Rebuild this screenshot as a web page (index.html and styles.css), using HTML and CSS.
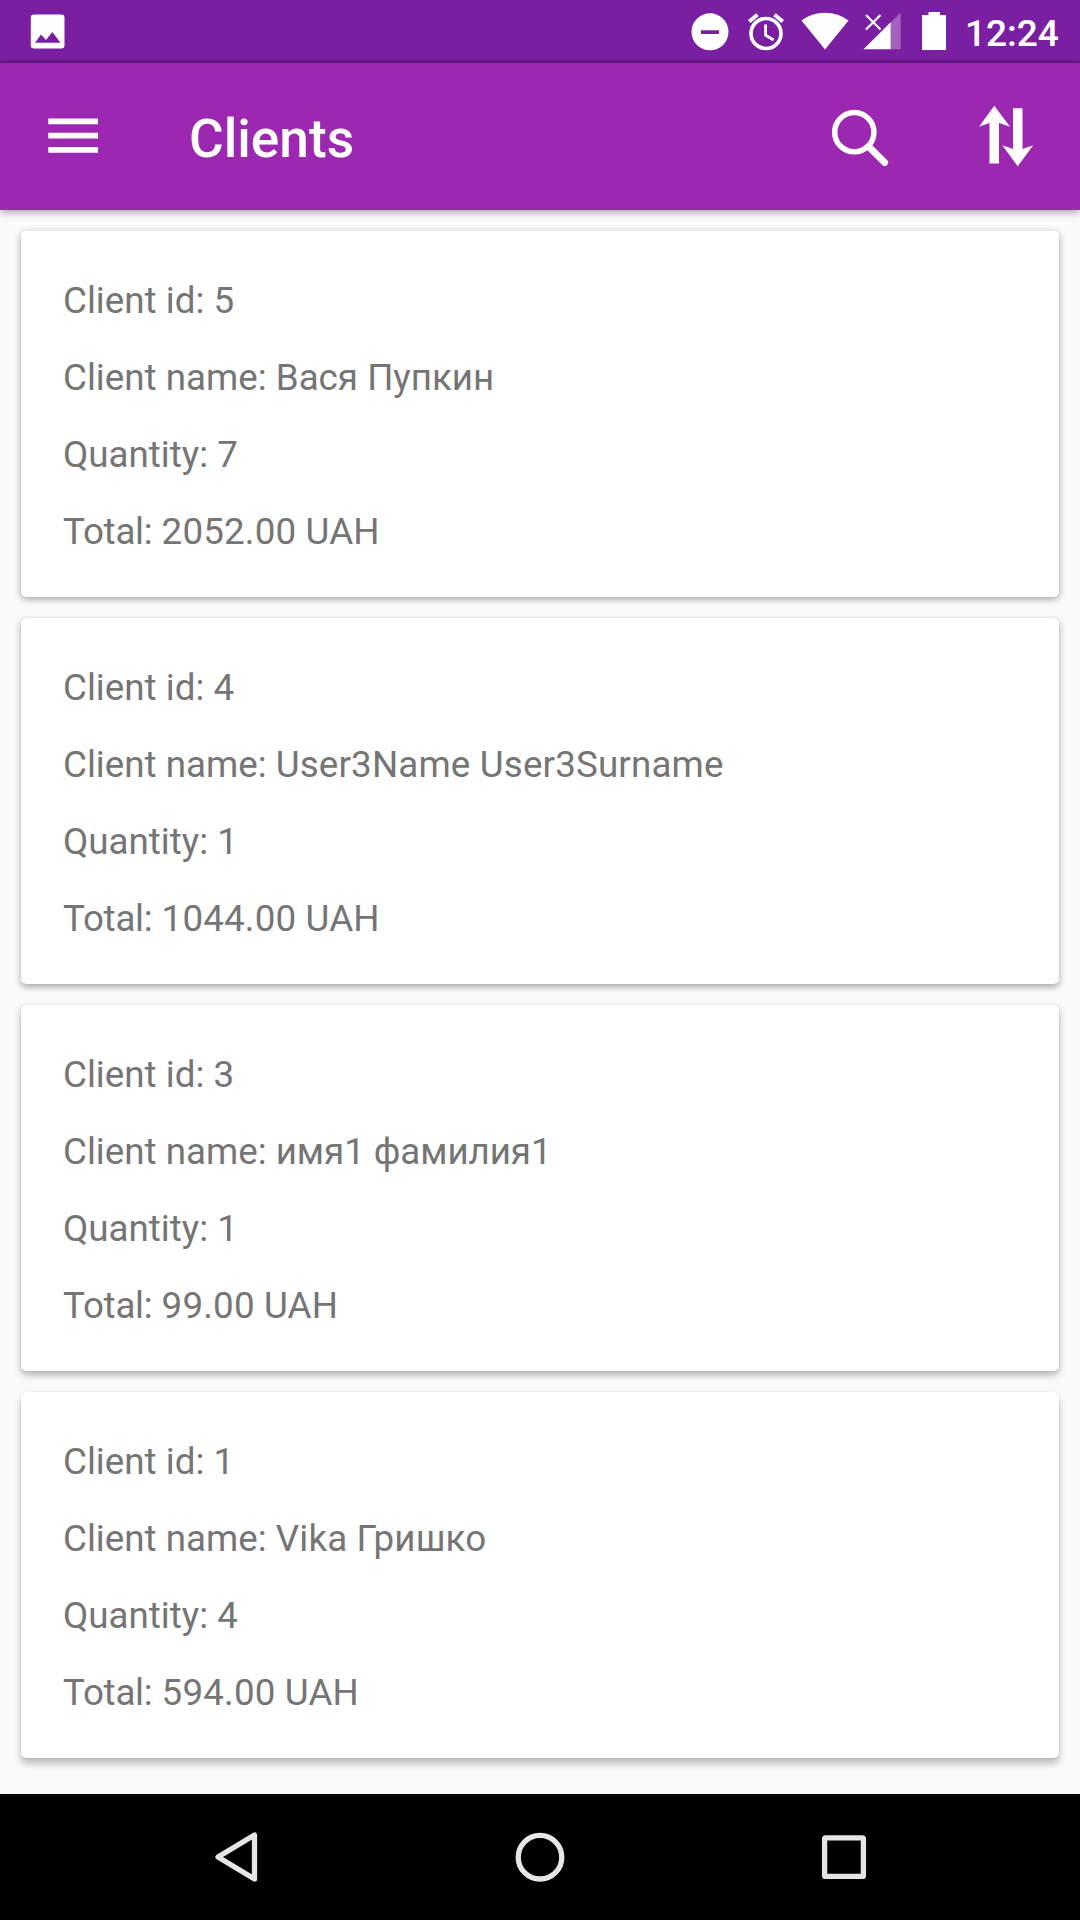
FILE: index.html
```html
<!DOCTYPE html>
<html lang="en">
<head>
<meta charset="utf-8">
<title>Clients</title>
<link rel="stylesheet" href="styles.css">
</head>
<body>
<div class="screen">
  <header class="status">
    <svg class="picture" width="40" height="63" viewBox="28 0 40 63"><path fill="#fff" fill-rule="evenodd" d="M34 14.5H61.3Q64.5 14.5 64.5 17.7V45.3Q64.5 48.5 61.3 48.5H34Q30.8 48.5 30.8 45.3V17.7Q30.8 14.5 34 14.5ZM35 42.7H60.5L52.3 32L46 40L41 34.5Z"/></svg>
    <svg width="270" height="63" viewBox="690 0 270 63" fill="#fff">
      <path fill-rule="evenodd" d="M710 13.3A18.5 18.5 0 1 1 710 50.3A18.5 18.5 0 1 1 710 13.3ZM701 30.3V34H719V30.3Z"/>
      <g fill="none" stroke="#fff" stroke-width="3.6"><circle cx="766" cy="33.5" r="15"/><path stroke-width="2.8" d="M765.6 24.5V35.2L773.6 40"/><path stroke-width="4" d="M749.2 21.5L757.5 14.8M774.5 14.8L782.8 21.5"/></g>
      <path d="M825 49.5L801.5 20.5Q811.5 12.7 825 12.7Q838.5 12.7 848.5 20.5Z"/>
      <path opacity=".3" d="M890.7 22.5L900.7 12.5V49.3H890.7Z"/><path d="M863.5 49.3L890.7 22.3V49.3Z"/>
      <path fill="none" stroke="#fff" stroke-width="2.2" d="M866 15L880.5 29.5M880.5 15L866 29.5"/>
      <path d="M922 15H928.5V12H940V15H946V50H922Z"/>
    </svg>
    <span class="time">12:24</span>
  </header>
  <div class="appbar">
    <svg width="54" height="147" viewBox="46 63 54 147"><path fill="#fff" d="M48.3 118.6H98V124.3H48.3ZM48.3 132.8H98V138.4H48.3ZM48.3 147H98V152.8H48.3Z"/></svg>
    <h1>Clients</h1>
    <svg width="210" height="147" viewBox="828 63 210 147">
      <g fill="none" stroke="#fff"><circle cx="854.3" cy="132.2" r="19.6" stroke-width="5.5"/><path d="M868.5 146.5L884.7 162.5" stroke-width="6.8" stroke-linecap="round"/></g>
      <path fill="#fff" d="M994.3 105.8L1010 126.8L999 123V163.5H989.5V123L979 126.8ZM1013 108.3H1022.5V149L1033.2 145.3L1017.7 166.2L1002.3 145.3L1013 149Z"/>
    </svg>
  </div>
  <main class="list">
    <article class="card first"><p>Client id: 5</p><p>Client name: Вася Пупкин</p><p>Quantity: 7</p><p><span class="label">Total:</span> <span class="latin">2052.00 UAH</span></p></article>
    <article class="card second"><p>Client id: 4</p><p>Client name: <span class="latin">User3Name User3Surname</span></p><p>Quantity: 1</p><p><span class="label">Total:</span> <span class="latin">1044.00 UAH</span></p></article>
    <article class="card third"><p>Client id: 3</p><p>Client name: <span class="tight">имя1 фамилия1</span></p><p>Quantity: 1</p><p><span class="label">Total:</span> <span class="latin">99.00 UAH</span></p></article>
    <article class="card fourth"><p>Client id: 1</p><p>Client name: <span class="latin">Vika Гришко</span></p><p>Quantity: 4</p><p><span class="label">Total:</span> <span class="latin">594.00 UAH</span></p></article>
  </main>
  <nav class="navbar">
    <svg width="660" height="56" viewBox="210 1829 660 56" fill="none" stroke="#e6e6e6" stroke-width="5.3" stroke-linejoin="round"><path d="M254.5 1835V1879L218 1857Z"/><circle cx="540" cy="1857.2" r="21.8"/><rect x="824.6" y="1837.8" width="38.8" height="38.6" rx="1"/></svg>
  </nav>
</div>
</body>
</html>
```
FILE: styles.css
```css
* { box-sizing: border-box; }
body { margin: 0; font-family: Roboto, sans-serif; }
svg { display: block; flex: none; }
.screen { width: 1080px; height: 1920px; display: flex; flex-direction: column; background: #fafafa; overflow: hidden; }
.status { height: 63px; display: flex; background: linear-gradient(#7b1fa2 59px, #641984 63px); color: #fff; }
.picture { margin: 0 622px 0 28px; }
.time { margin-left: 5px; font-size: 37px; font-weight: 500; line-height: 67px; }
.appbar { position: relative; height: 147px; display: flex; padding: 0 42px 0 46px; background: #9c27b0; color: #fff; box-shadow: 0 2px 8px rgba(0,0,0,.38); }
.appbar h1 { flex: 1; margin: 0 0 0 89px; font-size: 53.2px; font-weight: 500; line-height: 152px; }
.list { height: 1584px; padding: 21px; display: flex; flex-direction: column; gap: 21px; }
.card { height: 366px; padding: 31px 42px; border-radius: 5px; background: #fff; color: #757575; font-size: 36.75px; line-height: 77px; }
.card p { margin: 0; }
.first { box-shadow: 0 2px 7px rgba(0,0,0,.36); }
.second { box-shadow: 0 3px 7px rgba(0,0,0,.34), 0 0 1px rgba(0,0,0,.1); }
.third { box-shadow: 0 4px 7px rgba(0,0,0,.29), 0 0 2px rgba(0,0,0,.14); }
.fourth { box-shadow: 0 6px 7px rgba(0,0,0,.24), 0 0 2px rgba(0,0,0,.16); }
.label { letter-spacing: -.25px; }
.latin { letter-spacing: .16px; }
.tight { letter-spacing: -.08px; }
.navbar { height: 126px; background: #000; padding: 35px 210px; }
```
